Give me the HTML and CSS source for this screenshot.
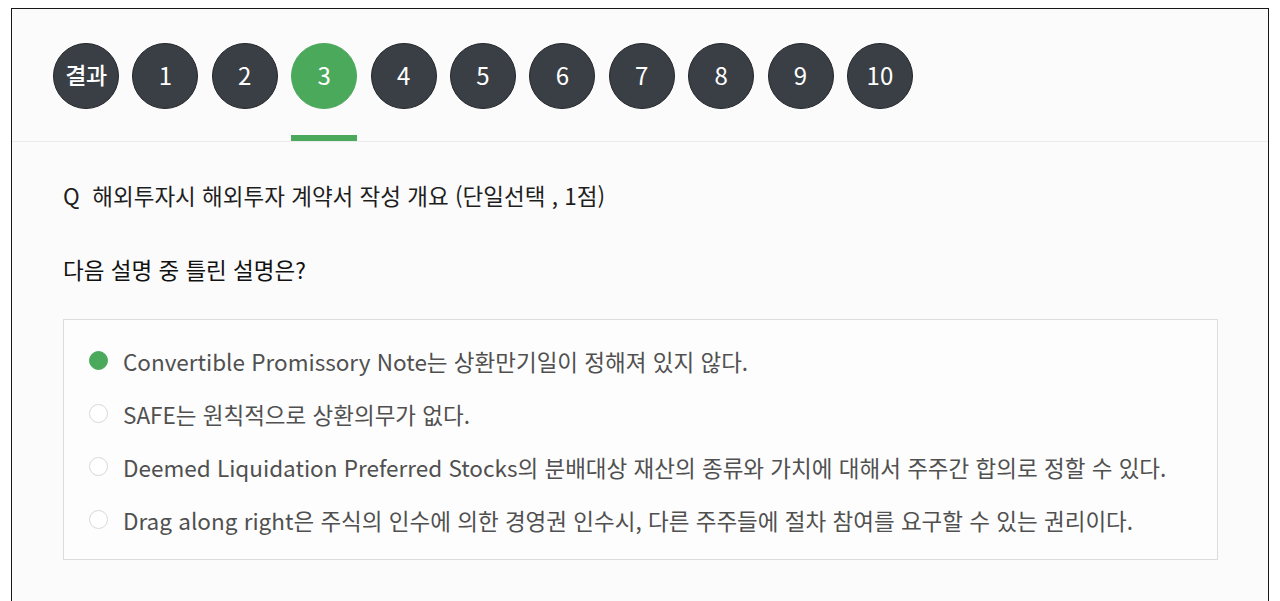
FILE: index.html
```html
<!DOCTYPE html>
<html lang="ko">
<head>
<meta charset="utf-8">
<title>Quiz</title>
<link rel="stylesheet" href="styles.css">
</head>
<body>
<div class="frame">
  <nav class="tabs">
    <div class="tab"><span class="circle small">결과</span><span class="bar"></span></div>
    <div class="tab"><span class="circle">1</span><span class="bar"></span></div>
    <div class="tab"><span class="circle">2</span><span class="bar"></span></div>
    <div class="tab active"><span class="circle">3</span><span class="bar"></span></div>
    <div class="tab"><span class="circle">4</span><span class="bar"></span></div>
    <div class="tab"><span class="circle">5</span><span class="bar"></span></div>
    <div class="tab"><span class="circle">6</span><span class="bar"></span></div>
    <div class="tab"><span class="circle">7</span><span class="bar"></span></div>
    <div class="tab"><span class="circle">8</span><span class="bar"></span></div>
    <div class="tab"><span class="circle">9</span><span class="bar"></span></div>
    <div class="tab"><span class="circle">10</span><span class="bar"></span></div>
  </nav>
  <main class="content">
    <p class="question">Q&nbsp;&nbsp;해외투자시 해외투자 계약서 작성 개요 (단일선택 , 1점)</p>
    <p class="prompt">다음 설명 중 틀린 설명은?</p>
    <ul class="options">
      <li class="option checked"><span class="radio"></span><span>Convertible Promissory Note는 상환만기일이 정해져 있지 않다.</span></li>
      <li class="option"><span class="radio"></span><span>SAFE는 원칙적으로 상환의무가 없다.</span></li>
      <li class="option"><span class="radio"></span><span>Deemed Liquidation Preferred Stocks의 분배대상 재산의 종류와 가치에 대해서 주주간 합의로 정할 수 있다.</span></li>
      <li class="option"><span class="radio"></span><span>Drag along right은 주식의 인수에 의한 경영권 인수시, 다른 주주들에 절차 참여를 요구할 수 있는 권리이다.</span></li>
    </ul>
  </main>
</div>
</body>
</html>
```

FILE: styles.css
```css
html, body {
  margin: 0;
  padding: 0;
  background: #ffffff;
}
body {
  font-family: "Noto Sans CJK KR", "Noto Sans", sans-serif;
  overflow: hidden;
}
.frame {
  margin: 8px 0 0 11px;
  width: 1258px;
  min-height: 620px;
  box-sizing: border-box;
  border: 1px solid #16181a;
  border-bottom: none;
  background: #fbfbfb;
}
.tabs {
  display: flex;
  gap: 13.4px;
  padding: 34px 0 0 41px;
  height: 133px;
  box-sizing: border-box;
  border-bottom: 1px solid #ebebeb;
}
.tab {
  width: 66px;
  display: flex;
  flex-direction: column;
  justify-content: space-between;
  align-items: center;
}
.circle {
  width: 66px;
  height: 66px;
  box-sizing: border-box;
  border-radius: 50%;
  background: #3a3f46;
  border: 1px solid #23262a;
  color: #ffffff;
  display: flex;
  align-items: center;
  justify-content: center;
  font-size: 24px;
  line-height: 1;
  padding-bottom: 3px;
}
.circle.small {
  font-size: 23px;
  font-weight: 500;
  letter-spacing: -0.3px;
}
.bar {
  width: 66px;
  height: 6px;
}
.tab.active .circle {
  background: #4aa95a;
  border-color: #4aa95a;
}
.tab.active .bar {
  background: #4aa95a;
}
.content {
  padding: 40px 50px 0 51px;
}
.question {
  margin: 0;
  font-size: 22.5px;
  line-height: 26px;
  color: #1e1e1e;
}
.prompt {
  margin: 48px 0 0;
  font-size: 22.5px;
  line-height: 26px;
  color: #111;
}
.options {
  list-style: none;
  margin: 37px 0 0;
  padding: 14px 0 13px 25px;
  border: 1px solid #dcdcdc;
  background: #fdfdfd;
}
.option {
  display: flex;
  align-items: center;
  gap: 15px;
  height: 53px;
  font-size: 22.5px;
  color: #505050;
}
.radio {
  width: 19px;
  height: 19px;
  box-sizing: border-box;
  border-radius: 50%;
  border: 1px solid #d6dadd;
  background: #fff;
  flex: none;
}
.option.checked .radio {
  background: #4aa95a;
  border-color: #4aa95a;
}
```
